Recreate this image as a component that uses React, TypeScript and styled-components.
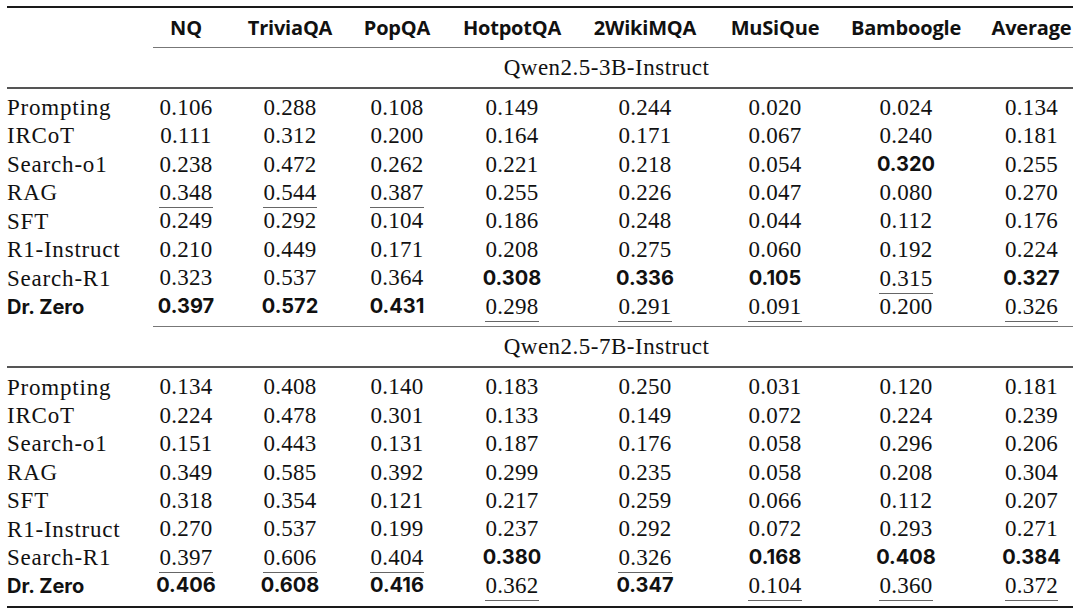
import React from "react";
import styled, { createGlobalStyle } from "styled-components";

const GlobalStyle = createGlobalStyle`
  html, body {
    margin: 0;
    padding: 0;
    background: #ffffff;
  }
`;

const COLUMNS = "133px 92px 116px 98px 132px 134px 126px 136px 99px";
const SERIF = `"Liberation Serif", "Times New Roman", serif`;
const SANS = `Inter, "Open Sans", sans-serif`;

const Page = styled.div`
  width: 1066px;
  padding: 6px 7px 0;
  color: #111;
`;

const Rule = styled.div<{ $size: number; $color: string; $indent?: number }>`
  height: ${(p) => p.$size}px;
  background: ${(p) => p.$color};
  margin-left: ${(p) => p.$indent || 0}px;
`;

const Row = styled.div<{ $height: number }>`
  display: grid;
  grid-template-columns: ${COLUMNS};
  height: ${(p) => p.$height}px;
  align-items: center;
`;

const Cell = styled.div<{ $first?: boolean; $last?: boolean }>`
  display: flex;
  align-items: center;
  justify-content: ${(p) => (p.$first ? "flex-start" : "center")};
  padding-left: ${(p) => (p.$last ? 16 : 0)}px;
  white-space: nowrap;
`;

const ColumnTitle = styled.span`
  font-family: "Open Sans", sans-serif;
  font-weight: 700;
  font-size: 20px;
  letter-spacing: -0.2px;
`;

const GroupTitle = styled.div`
  grid-column: 2 / 10;
  text-align: center;
  font-family: ${SERIF};
  font-size: 23px;
  letter-spacing: 0.5px;
`;

const Body = styled.div`
  padding: 4.3px 0 6.3px;
`;

const Method = styled.span<{ $bold?: boolean }>`
  font-family: ${(p) => (p.$bold ? SANS : SERIF)};
  font-weight: ${(p) => (p.$bold ? 700 : 400)};
  font-size: ${(p) => (p.$bold ? 20 : 23)}px;
  letter-spacing: ${(p) => (p.$bold ? 0 : 0.8)}px;
`;

const Value = styled.span<{ $bold?: boolean; $under?: boolean }>`
  display: inline-block;
  line-height: 1;
  padding: 3px 0 ${(p) => (p.$under ? 3 : 4.5)}px;
  border-bottom: ${(p) => (p.$under ? "1.5px solid #666" : "none")};
  font-family: ${(p) => (p.$bold ? SANS : SERIF)};
  font-weight: ${(p) => (p.$bold ? 700 : 400)};
  font-size: ${(p) => (p.$bold ? 20 : 23)}px;
  letter-spacing: ${(p) => (p.$bold ? 0 : 0.3)}px;
`;

const datasets = ["NQ", "TriviaQA", "PopQA", "HotpotQA", "2WikiMQA", "MuSiQue", "Bamboogle", "Average"];

// "b" = best (bold), "u" = second best (underlined)
type Entry = [string, string, ("b" | "u" | "")[]];

const small: Entry[] = [
  ["Prompting", "0.106 0.288 0.108 0.149 0.244 0.020 0.024 0.134", []],
  ["IRCoT", "0.111 0.312 0.200 0.164 0.171 0.067 0.240 0.181", []],
  ["Search-o1", "0.238 0.472 0.262 0.221 0.218 0.054 0.320 0.255", ["", "", "", "", "", "", "b", ""]],
  ["RAG", "0.348 0.544 0.387 0.255 0.226 0.047 0.080 0.270", ["u", "u", "u"]],
  ["SFT", "0.249 0.292 0.104 0.186 0.248 0.044 0.112 0.176", []],
  ["R1-Instruct", "0.210 0.449 0.171 0.208 0.275 0.060 0.192 0.224", []],
  ["Search-R1", "0.323 0.537 0.364 0.308 0.336 0.105 0.315 0.327", ["", "", "", "b", "b", "b", "u", "b"]],
  ["Dr. Zero", "0.397 0.572 0.431 0.298 0.291 0.091 0.200 0.326", ["b", "b", "b", "u", "u", "u", "", "u"]],
];

const large: Entry[] = [
  ["Prompting", "0.134 0.408 0.140 0.183 0.250 0.031 0.120 0.181", []],
  ["IRCoT", "0.224 0.478 0.301 0.133 0.149 0.072 0.224 0.239", []],
  ["Search-o1", "0.151 0.443 0.131 0.187 0.176 0.058 0.296 0.206", []],
  ["RAG", "0.349 0.585 0.392 0.299 0.235 0.058 0.208 0.304", []],
  ["SFT", "0.318 0.354 0.121 0.217 0.259 0.066 0.112 0.207", []],
  ["R1-Instruct", "0.270 0.537 0.199 0.237 0.292 0.072 0.293 0.271", []],
  ["Search-R1", "0.397 0.606 0.404 0.380 0.326 0.168 0.408 0.384", ["u", "u", "u", "b", "u", "b", "b", "b"]],
  ["Dr. Zero", "0.406 0.608 0.416 0.362 0.347 0.104 0.360 0.372", ["b", "b", "b", "u", "b", "u", "u", "u"]],
];

const Block: React.FC<{ title: string; rows: Entry[] }> = ({ title, rows }) => (
  <>
    <Row $height={39}>
      <GroupTitle>{title}</GroupTitle>
    </Row>
    <Rule $size={1.5} $color="#555" />
    <Body>
      {rows.map(([name, values, marks]) => (
        <Row key={name} $height={28.43}>
          <Cell $first>
            <Method $bold={name === "Dr. Zero"}>{name}</Method>
          </Cell>
          {values.split(" ").map((v, i) => (
            <Cell key={i} $last={i === 7}>
              <Value $bold={marks[i] === "b"} $under={marks[i] === "u"}>
                {v}
              </Value>
            </Cell>
          ))}
        </Row>
      ))}
    </Body>
  </>
);

const App: React.FC = () => (
  <Page>
    <GlobalStyle />
    <Rule $size={2} $color="#1a1a1a" />
    <Row $height={39}>
      <Cell $first />
      {datasets.map((d, i) => (
        <Cell key={d} $last={i === 7}>
          <ColumnTitle>{d}</ColumnTitle>
        </Cell>
      ))}
    </Row>
    <Rule $size={1} $color="#777" $indent={146} />
    <Block title="Qwen2.5-3B-Instruct" rows={small} />
    <Rule $size={1} $color="#777" $indent={146} />
    <Block title="Qwen2.5-7B-Instruct" rows={large} />
    <Rule $size={2} $color="#1a1a1a" />
  </Page>
);

export default App;
